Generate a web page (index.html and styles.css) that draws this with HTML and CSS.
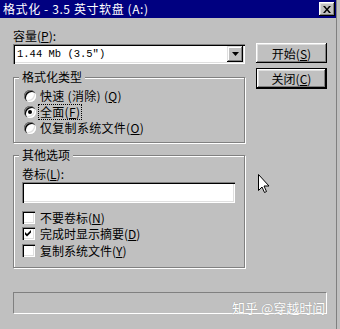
FILE: index.html
```html
<!DOCTYPE html>
<html lang="zh-CN">

<head>
    <meta charset="UTF-8">
    <meta name="viewport" content="width=device-width, initial-scale=1.0">
    <title>格式化 - 3.5 英寸软盘 (A:)</title>
    <link rel="stylesheet" href="styles.css">
</head>

<body>
    <div class="window">
        <div class="titlebar">
            <span class="title">格式化 - 3.5 英寸软盘 (A:)</span>
            <span class="close-btn">
                <svg width="8" height="7" viewBox="0 0 8 7">
                    <path d="M0 0h2l2 2.5 2-2.5h2l-3 3.5 3 3.5h-2l-2-2.5-2 2.5h-2l3-3.5z" fill="#000" />
                </svg>
            </span>
        </div>
        <div class="content">
            <div class="main">
                <div class="label">容量(<u>P</u>):</div>
                <div class="combo">
                    <span class="combo-text">1.44 Mb (3.5")</span>
                    <span class="drop-btn">
                        <svg width="7" height="4" viewBox="0 0 7 4">
                            <path d="M0 0h7l-3.5 4z" fill="#000" />
                        </svg>
                    </span>
                </div>

                <!-- 格式化类型 -->
                <fieldset class="group">
                    <legend>格式化类型</legend>
                    <div class="group-body type-body">
                        <div class="option"><span class="radio"></span><span class="text">快速 (消除) (<u>Q</u>)</span></div>
                        <div class="option"><span class="radio checked"></span><span class="text focus">全面(<u>F</u>)</span></div>
                        <div class="option"><span class="radio"></span><span class="text">仅复制系统文件(<u>O</u>)</span></div>
                    </div>
                </fieldset>

                <!-- 其他选项 -->
                <fieldset class="group other">
                    <legend>其他选项</legend>
                    <div class="group-body other-body">
                        <div class="label">卷标(<u>L</u>):</div>
                        <div class="textbox"></div>
                        <div class="checks">
                            <div class="option"><span class="check"></span><span class="text">不要卷标(<u>N</u>)</span></div>
                            <div class="option">
                                <span class="check">
                                    <svg width="13" height="13" viewBox="0 0 13 13">
                                        <path d="M3 5l2 2 4-4v2.5l-4 4-2-2z" fill="#000" />
                                    </svg>
                                </span>
                                <span class="text">完成时显示摘要(<u>D</u>)</span>
                            </div>
                            <div class="option"><span class="check"></span><span class="text">复制系统文件(<u>Y</u>)</span></div>
                        </div>
                    </div>
                </fieldset>
            </div>
            <div class="side">
                <button class="btn">开始(<u>S</u>)</button>
                <button class="btn default">关闭(<u>C</u>)</button>
            </div>
        </div>
        <div class="progress"></div>
    </div>

    <div class="watermark">知乎 @穿越时间</div>
    <svg class="cursor" width="13" height="20" viewBox="0 0 13 20">
        <path d="M0.5 0.5v16l3.5-3.5 2.5 5.5 2-1-2.5-5.5h5z" fill="#fff" stroke="#000" />
    </svg>
</body>

</html>
```

FILE: styles.css
```css
* {
    margin: 0;
    padding: 0;
    box-sizing: border-box;
}

body {
    width: 340px;
    height: 329px;
    overflow: hidden;
    background-color: #c0c0c0;
    font-family: "Noto Sans CJK SC", "Liberation Sans", sans-serif;
    font-size: 12px;
    color: #000;
    position: relative;
}

.window {
    width: 337px;
    height: 329px;
    border-right: 1px solid #808080;
}

.titlebar {
    height: 18px;
    background-color: #000080;
    color: #fff;
    display: flex;
    align-items: center;
    justify-content: space-between;
    padding: 0 1px 0 3px;
    line-height: 18px;
}

.title {
    letter-spacing: 0.6px;
}

.close-btn {
    width: 16px;
    height: 14px;
    background-color: #c0c0c0;
    display: flex;
    align-items: center;
    justify-content: center;
    box-shadow: inset -1px -1px #000, inset 1px 1px #fff, inset -2px -2px #808080, inset 2px 2px #dfdfdf;
}

.content {
    display: flex;
    padding: 9px 0 0 13px;
}

.main {
    width: 232px;
}

.label {
    line-height: 17px;
    height: 17px;
}

/* 下拉框 */
.combo {
    height: 20px;
    background-color: #fff;
    display: flex;
    align-items: center;
    justify-content: space-between;
    padding: 2px;
    box-shadow: inset 1px 1px #808080, inset 2px 2px #000, inset -1px -1px #fff, inset -2px -2px #dfdfdf;
}

.combo-text {
    font-family: "Liberation Mono", monospace;
    font-size: 10.5px;
    padding-left: 2px;
}

.drop-btn {
    width: 16px;
    height: 16px;
    background-color: #c0c0c0;
    display: flex;
    align-items: center;
    justify-content: center;
    box-shadow: inset -1px -1px #000, inset 1px 1px #dfdfdf, inset -2px -2px #808080, inset 2px 2px #fff;
}

/* 分组框 */
.group {
    margin-top: 6px;
    border: 1px solid #808080;
    box-shadow: 1px 1px 0 #fff, inset 1px 1px 0 #fff;
    min-width: 0;
}

.group legend {
    margin-left: 5px;
    padding: 0 3px;
    line-height: 14px;
    background-color: #c0c0c0;
}

.group.other {
    margin-top: 5px;
}

.type-body {
    padding: 4px 0 6px 10px;
}

.other-body {
    padding: 3px 9px 8px 8px;
}

.option {
    display: flex;
    align-items: center;
    height: 16px;
}

.radio {
    width: 12px;
    height: 12px;
    border-radius: 50%;
    background-color: #fff;
    box-shadow: inset 1px 1px 0 #808080, inset 2px 2px 0 #000, inset -1px -1px 0 #fff, inset -2px -2px 0 #dfdfdf;
    display: flex;
    align-items: center;
    justify-content: center;
    flex-shrink: 0;
}

.radio.checked::after {
    content: "";
    width: 4px;
    height: 4px;
    border-radius: 50%;
    background-color: #000;
}

.type-body .text {
    margin-left: 4px;
    line-height: 14px;
    letter-spacing: 0.3px;
}

.text.focus {
    outline: 1px dotted #000;
    margin-left: 3px;
    padding: 0 1px;
}

.textbox {
    height: 21px;
    background-color: #fff;
    box-shadow: inset 1px 1px #808080, inset 2px 2px #000, inset -1px -1px #fff, inset -2px -2px #dfdfdf;
}

.checks {
    margin-top: 6px;
}

.checks .option {
    height: 16.5px;
}

.check {
    width: 13px;
    height: 13px;
    background-color: #fff;
    box-shadow: inset 1px 1px #808080, inset 2px 2px #000, inset -1px -1px #fff, inset -2px -2px #dfdfdf;
    flex-shrink: 0;
}

.check svg {
    display: block;
}

.checks .text {
    margin-left: 5px;
}

/* 右侧按钮 */
.side {
    margin-left: 11px;
    padding-top: 16px;
    display: flex;
    flex-direction: column;
    gap: 5px;
}

.btn {
    width: 71px;
    height: 20px;
    border: none;
    background-color: #c0c0c0;
    font-family: inherit;
    font-size: 12px;
    color: #000;
    box-shadow: inset -1px -1px #000, inset 1px 1px #fff, inset -2px -2px #808080, inset 2px 2px #dfdfdf;
}

.btn.default {
    border: 1px solid #000;
    height: 21px;
}

.progress {
    margin: 24px 9px 0 13px;
    height: 22px;
    border-top: 1px solid #808080;
    border-left: 1px solid #808080;
    border-bottom: 1px solid #fff;
    border-right: 1px solid #fff;
}

.watermark {
    position: absolute;
    left: 232px;
    top: 299px;
    font-size: 13px;
    line-height: 18px;
    color: #fff;
    text-shadow: 0 0 1px rgba(0, 0, 0, 0.3);
}

.cursor {
    position: absolute;
    left: 258px;
    top: 174px;
}
```
